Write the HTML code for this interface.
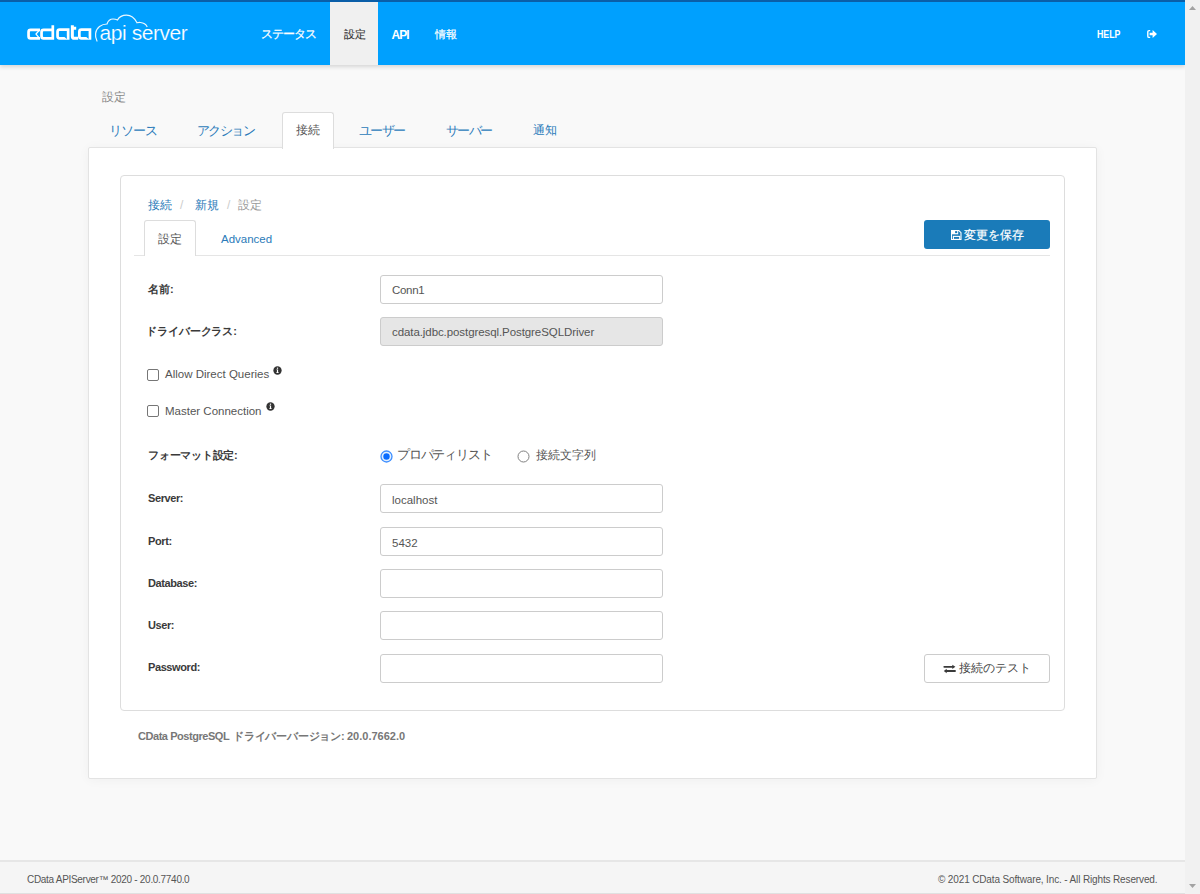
<!DOCTYPE html>
<html><head><meta charset="utf-8">
<style>
*{box-sizing:border-box;margin:0;padding:0}
html,body{width:1200px;height:894px;overflow:hidden}
body{font-family:"Liberation Sans",sans-serif;background:#f9f9f9;color:#555;position:relative}
.a{position:absolute}
.t{position:absolute;line-height:1;white-space:nowrap}
#hdr{left:0;top:0;width:1185px;height:65px;background:#00a0fe;border-top:2px solid #0a5ea8;box-shadow:0 2px 4px rgba(0,0,0,.14)}
#scroll{left:1185px;top:0;width:15px;height:894px;background:#f1f1f1}
.nav{color:#fff;font-size:12px}
#main{left:88px;top:147px;width:1009px;height:632px;background:#fff;border:1px solid #e3e3e3;border-radius:2px;box-shadow:0 1px 12px rgba(0,0,0,.045)}
.tab{font-size:13px;color:#2b7bb9}
#panel{left:120px;top:175px;width:945px;height:536px;border:1px solid #ddd;border-radius:4px;background:#fff}
.lbl{left:148px;font-size:11px;font-weight:bold;color:#3a3a3a}
.inp{position:absolute;left:380px;width:283px;height:28.5px;border:1px solid #ccc;border-radius:3px;background:#fff}
.itx{left:392px;font-size:11.5px;color:#555}
.en{letter-spacing:-0.4px}
.chk{position:absolute;left:147px;width:12px;height:12px;border:1px solid #767676;border-radius:2px;background:#fff}
.rad{position:absolute;width:12px;height:12px;border-radius:50%}
</style></head><body>
<div id="hdr" class="a"></div>
<!-- logo -->
<svg class="a" style="left:0;top:0" width="200" height="65" viewBox="0 0 200 65">
 <g fill="none" stroke="#fff" stroke-width="2.7">
  <path d="M40 29.95 H30.6 Q28.55 29.95 28.55 32 V36.2 Q28.55 38.35 30.6 38.35 H40"/>
  <path d="M39.6 29.8 L36 34.1 L39.8 38.6" stroke-width="1.3"/>
  <path d="M52.8 25.3 V39.7 M52.8 29.95 H43.6 Q41.55 29.95 41.55 32 V36.2 Q41.55 38.35 43.6 38.35 H52.8"/>
  <path d="M68.15 28.3 V39.7 M68.15 29.65 H59.6 Q57.55 29.65 57.55 31.7 V36.3 Q57.55 38.35 59.6 38.35 H68.15"/>
  <path d="M72.35 25.2 V36.5 Q72.35 38.35 74.4 38.35 H78.2 M72 28.35 H76.2" stroke-width="3"/>
  <path d="M89.95 28.3 V39.7 M89.95 29.65 H81.4 Q79.35 29.65 79.35 31.7 V36.3 Q79.35 38.35 81.4 38.35 H89.95"/>
 </g>
 <path d="M64.2 36.7 H66.85 V38.9 Z M86 36.7 H88.65 V38.9 Z" fill="#00a0fe"/>
 <path d="M97 41 C94.5 36.5 95 30 99.5 26.5 C101.5 25 104.5 24 107 24 C108 21 110.5 19 113 19 C115 19 116.5 19.5 117.5 20 C119.5 16.5 123 15.2 126.5 15.2 C131 15.2 134.5 18 137 22.75 C138 22.5 139 22.4 140.5 22.5 C143.5 22.8 146 24.5 147 26.5" fill="none" stroke="#fff" stroke-width="1.2" stroke-linecap="round" opacity=".92"/>
 <text x="99.6" y="39.6" fill="#fff" stroke="#00a0fe" stroke-width="0.2" font-family="Liberation Sans" font-size="21" letter-spacing="-0.45">api server</text>
</svg>
<div class="a" style="left:330px;top:2px;width:48px;height:63px;background:#f0f0f0"></div>
<div class="t nav" style="left:261px;top:28px;font-size:12px;letter-spacing:-0.9px;-webkit-text-stroke:0.25px #fff">ステータス</div>
<div class="t nav" style="left:343.5px;top:28.5px;color:#333;font-size:11px;-webkit-text-stroke:0.15px #333">設定</div>
<div class="t nav" style="left:391.5px;top:29px;font-weight:bold;font-size:12px;letter-spacing:-0.9px">API</div>
<div class="t nav" style="left:435px;top:28.5px;font-size:11px;-webkit-text-stroke:0.2px #fff">情報</div>
<div class="t nav" style="left:1096.5px;top:28.5px;font-weight:bold;font-size:11px;transform:scaleX(0.8);transform-origin:0 0">HELP</div>
<svg class="a" style="left:1146px;top:29px" width="12" height="10" viewBox="0 0 12 10">
 <path d="M4.2 1.6 H3 Q1.8 1.6 1.8 2.8 V7.2 Q1.8 8.4 3 8.4 H4.2" fill="none" stroke="#fff" stroke-width="1.4"/>
 <path d="M3.6 3.7 H6.6 V1 L11 5 L6.6 9 V6.3 H3.6 Z" fill="#fff"/>
</svg>
<div id="scroll" class="a"></div>
<svg class="a" style="left:1185px;top:0" width="15" height="894" viewBox="0 0 15 894">
 <path d="M4 10 L7.5 6 L11 10 Z" fill="#a3a3a3"/>
 <path d="M4 884 L7.5 888 L11 884 Z" fill="#a3a3a3"/>
</svg>

<div class="t" style="left:101.5px;top:92px;font-size:11.5px;color:#888">設定</div>
<div id="main" class="a"></div>
<div class="a" style="left:282px;top:112px;width:52px;height:37px;background:#fff;border:1px solid #ddd;border-bottom:none;border-radius:3px 3px 0 0"></div>
<div class="t tab" style="left:109px;top:124px;letter-spacing:-1.1px">リソース</div>
<div class="t tab" style="left:197px;top:124px;letter-spacing:-1.6px">アクション</div>
<div class="t tab" style="left:296px;top:124px;color:#555;font-size:12px">接続</div>
<div class="t tab" style="left:359px;top:124px;letter-spacing:-1.6px">ユーザー</div>
<div class="t tab" style="left:446px;top:124px;letter-spacing:-1.6px">サーバー</div>
<div class="t tab" style="left:533px;top:124px;font-size:12px">通知</div>

<div id="panel" class="a"></div>
<div class="t" style="left:148px;top:199px;font-size:12px;color:#2b7bb9">接続</div>
<div class="t" style="left:180px;top:199px;font-size:12px;color:#ccc">/</div>
<div class="t" style="left:195px;top:199px;font-size:12px;color:#2b7bb9">新規</div>
<div class="t" style="left:227px;top:199px;font-size:12px;color:#ccc">/</div>
<div class="t" style="left:238px;top:199px;font-size:12px;color:#999">設定</div>
<div class="a" style="left:134px;top:255px;width:916px;height:1px;background:#e5e5e5"></div>
<div class="a" style="left:144px;top:220px;width:52px;height:36px;background:#fff;border:1px solid #ddd;border-bottom:none;border-radius:3px 3px 0 0"></div>
<div class="t" style="left:158px;top:233px;font-size:12px;color:#555">設定</div>
<div class="t" style="left:221px;top:233.5px;font-size:11.5px;color:#2b7bb9">Advanced</div>
<div class="a" style="left:924px;top:220px;width:126px;height:29px;border-radius:3px;background:#1a7bb9"></div>
<svg class="a" style="left:951px;top:230px" width="11" height="10" viewBox="0 0 11 10">
 <path d="M0.5 0.5 H7.8 L10 2.7 V9.5 H0.5 Z" fill="none" stroke="#fff" stroke-width="1.1"/>
 <rect x="1" y="0.5" width="6.2" height="3.8" fill="#fff"/><rect x="4.1" y="1.1" width="2.1" height="2" fill="#1a7bb9"/>
 <rect x="2.4" y="6.4" width="6.3" height="3" fill="none" stroke="#fff" stroke-width="1.1"/>
</svg>
<div class="t" style="left:964px;top:229px;font-size:12px;color:#fff;-webkit-text-stroke:0.2px #fff">変更を保存</div>

<div class="t lbl" style="top:284px">名前:</div>
<div class="inp" style="top:275px"></div>
<div class="t itx" style="top:285px;letter-spacing:-0.3px">Conn1</div>
<div class="t lbl" style="left:146px;top:326px;letter-spacing:-0.1px">ドライバークラス:</div>
<div class="inp" style="top:317px;background:#e6e6e6"></div>
<div class="t itx" style="top:327px;letter-spacing:-0.08px">cdata.jdbc.postgresql.PostgreSQLDriver</div>

<div class="chk" style="top:369px"></div>
<div class="t" style="left:165px;top:369px;font-size:11.5px;color:#555">Allow Direct Queries</div>
<svg class="a" style="left:273.3px;top:366px" width="9" height="9" viewBox="0 0 9 9"><circle cx="4.5" cy="4.5" r="4.15" fill="#333"/><path d="M3.4 3.4 H5.1 V6.3 H5.7 V7.1 H3.3 V6.3 H3.9 V4.1 H3.4 Z" fill="#fff"/><rect x="3.9" y="1.6" width="1.2" height="1.2" fill="#fff"/></svg>
<div class="chk" style="top:405px"></div>
<div class="t" style="left:165px;top:405.5px;font-size:11.5px;color:#555">Master Connection</div>
<svg class="a" style="left:266.3px;top:402px" width="9" height="9" viewBox="0 0 9 9"><circle cx="4.5" cy="4.5" r="4.15" fill="#333"/><path d="M3.4 3.4 H5.1 V6.3 H5.7 V7.1 H3.3 V6.3 H3.9 V4.1 H3.4 Z" fill="#fff"/><rect x="3.9" y="1.6" width="1.2" height="1.2" fill="#fff"/></svg>

<div class="t lbl" style="top:450px;letter-spacing:-0.25px">フォーマット設定:</div>
<svg class="a" style="left:379.5px;top:450px" width="13" height="13" viewBox="0 0 13 13"><circle cx="6.5" cy="6.5" r="5.5" fill="#e3f0ff" stroke="#3d8eff" stroke-width="1.3"/><circle cx="6.5" cy="6.5" r="3.2" fill="#0a6cff"/></svg>
<div class="t" style="left:397px;top:449px;font-size:12.5px;color:#555;letter-spacing:-1.2px">プロパティリスト</div>
<svg class="a" style="left:517px;top:450px" width="13" height="13" viewBox="0 0 13 13"><circle cx="6.5" cy="6.5" r="5.5" fill="#fff" stroke="#808080" stroke-width="1"/></svg>
<div class="t" style="left:536px;top:450px;font-size:11.5px;color:#555">接続文字列</div>

<div class="t lbl en" style="top:493px">Server:</div>
<div class="inp" style="top:484px"></div>
<div class="t itx" style="top:495px">localhost</div>
<div class="t lbl en" style="top:535.5px">Port:</div>
<div class="inp" style="top:527px"></div>
<div class="t itx" style="top:538px">5432</div>
<div class="t lbl en" style="top:578px">Database:</div>
<div class="inp" style="top:569px"></div>
<div class="t lbl en" style="top:620px">User:</div>
<div class="inp" style="top:611px"></div>
<div class="t lbl en" style="top:662px">Password:</div>
<div class="inp" style="top:654px"></div>
<div class="a" style="left:924px;top:654px;width:126px;height:29px;border-radius:3px;background:#fff;border:1px solid #ccc"></div>
<svg class="a" style="left:943px;top:664px" width="13" height="10" viewBox="0 0 13 10">
 <path d="M1.3 2.85 H9.8 M3.5 7 H12" stroke="#3a3a3a" stroke-width="1.9" stroke-linecap="round"/>
 <path d="M9.3 0.7 L12.4 2.85 L9.3 5 Z M3.7 4.85 L0.8 7 L3.7 9.15 Z" fill="#3a3a3a"/>
</svg>
<div class="t" style="left:959px;top:663px;font-size:11.5px;color:#444">接続のテスト</div>

<div class="t" style="left:138px;top:730.5px;font-size:11px;font-weight:bold;color:#777;letter-spacing:-0.45px">CData PostgreSQL</div>
<div class="t" style="left:233px;top:730.5px;font-size:11px;font-weight:bold;color:#777;letter-spacing:-0.2px">ドライバーバージョン:</div>
<div class="t" style="left:347px;top:730.5px;font-size:11px;font-weight:bold;color:#777">20.0.7662.0</div>

<div class="a" style="left:0;top:860px;width:1185px;height:34px;background:#f5f5f5;border-top:2px solid #e6e6e6;border-bottom:1px solid #e0e0e0"></div>
<div class="t" style="left:27px;top:875px;font-size:10px;color:#555;letter-spacing:-0.3px">CData APIServer™ 2020 - 20.0.7740.0</div>
<div class="t" style="left:938px;top:875px;font-size:10px;color:#555;letter-spacing:-0.14px">© 2021 CData Software, Inc. - All Rights Reserved.</div>
</body></html>
